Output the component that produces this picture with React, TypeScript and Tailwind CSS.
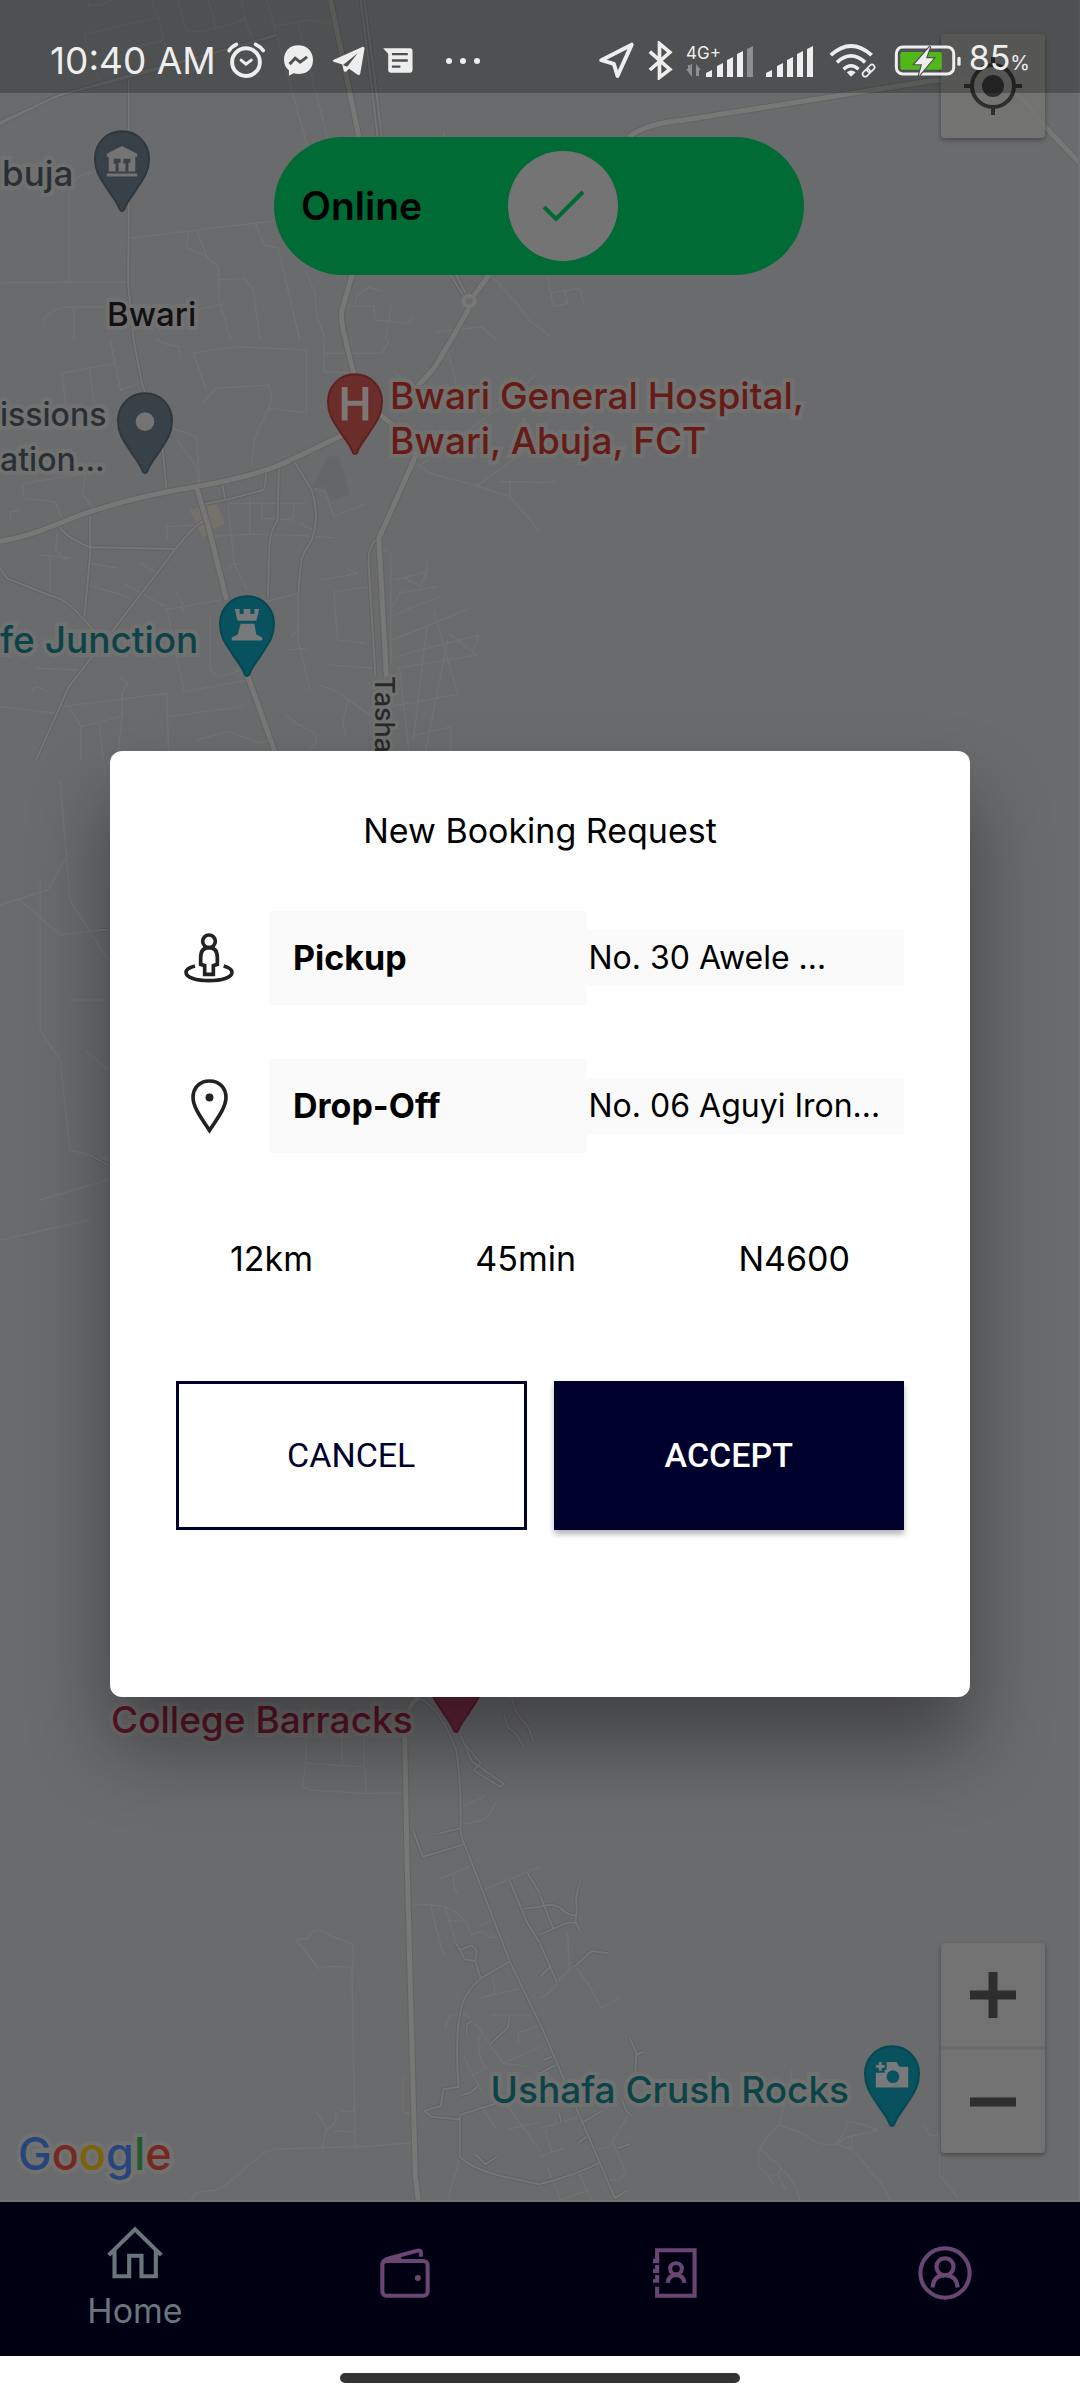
import React from "react";

const MINOR = "#717271";
const MID = "#747574";
const EDGE = "#626365";
const MAJOR = "#777775";

function Road({ d, kind = "minor" }: { d: string; kind?: "minor" | "mid" | "major" }) {
  if (kind === "minor") {
    return <path d={d} stroke={MINOR} strokeWidth="1.5" vectorEffect="non-scaling-stroke" />;
  }
  const wide = kind === "major";
  return (
    <>
      <path d={d} stroke={EDGE} strokeWidth={wide ? 7 : 4} vectorEffect="non-scaling-stroke" />
      <path d={d} stroke={wide ? MAJOR : MID} strokeWidth={wide ? 5 : 2} vectorEffect="non-scaling-stroke" />
    </>
  );
}

function MapRoads() {
  return (
    <svg aria-hidden="true" className="absolute top-0 left-0 h-[2202px] w-[1080px]" viewBox="0 0 1080 2202" fill="none" strokeLinejoin="round">
      <g transform="scale(.3444 .3333)">
        <Road d="M255 0L260 18L300 12L325 0M440 0L460 52L245 103L255 145L290 240M460 52L490 180M270 170L478 120M517 0L540 90L580 96L640 82L712 58L700 0M605 0L627 82M712 58L728 105L745 128" />
        <Road d="M775 0L890 430M797 78L900 60L968 72M865 68L950 410M0 848L372 846M200 850V600Q200 520 270 518M378 715L800 662M572 692L600 770L634 800L636 900L670 1020M547 697L542 745L605 770" />
        <Road d="M636 840L710 835L735 870L755 1020M740 668L768 735L808 745L850 930L870 1020M885 810L915 880L920 950L945 1015M1112 875L1070 862L1035 890L1030 920M1005 918L1085 918L1090 960L1190 970L1195 950M1137 915L1120 1020" />
        <Road d="M1430 830L1500 910L1540 965L1600 1010M125 965Q140 920 220 920L370 920M215 920V1020M570 930L650 912M1265 995L1400 980L1440 1020M1588 825L1606 920L1648 910L1640 875M1596 880L1683 865L1695 910M1290 390V415" />
        <Road kind="mid" d="M0 366L180 282Q400 230 805 103M0 372L160 290L410 215L800 108M374 240V400M374 600L372 850L388 1020M1047 0L1078 250L1096 410M1058 0L1090 250L1108 410" />
        <Road kind="major" d="M960 0L1042 410M1022 825L992 935Q990 980 1005 1020M1362 925L1310 1020M1420 825L1375 888M1826 410Q1878 370 1988 360L2658 250Q2728 237 2808 237Q2938 250 2988 320L3048 395L3136 490" />
        <Road kind="mid" d="M1308 825L1345 885M1325 825L1352 880" />
        <circle cx="1362" cy="903" r="16" stroke={MAJOR} strokeWidth="4" vectorEffect="non-scaling-stroke" />
      </g>
      <g transform="translate(0 340) scale(.3444 .3333)">
        <path d="M985 350L1015 465L960 485L945 440L905 445L950 350Z" fill="#656668" />
        <path d="M550 510L578 500L608 585L588 592ZM600 495L630 490L652 550L612 572Z" fill="#73716a" />
        <Road d="M180 100L335 70M180 100L190 190L235 250M260 90L275 200M320 0L350 150L412 128M455 0L490 15L520 20L525 55M560 40L680 20L890 30V220M560 40L600 150M590 190L625 145L780 135L790 175L780 205L885 218M780 205L740 290L730 380M940 0V95M940 40H1110L1130 0M940 95L1020 98M500 265L570 290L580 430" />
        <Road d="M515 300L570 380L578 430M1208 370L1250 400L1385 438L1480 470L1568 575M1385 438L1568 300M1220 375L1480 180L1560 100M1450 425H1540L1568 428L1612 424M1480 425L1480 470M1300 30L1320 110L1340 200M1140 90L1200 150" />
        <Road d="M665 490H885M725 465V585M620 590Q720 575 970 593M662 490L680 670L718 750M760 485V535L850 540L855 495M905 445L945 455L970 530L1062 490M870 550L910 570M665 690L670 672L700 670M30 545V515L55 510M65 430L70 475L160 485L185 545M70 430L250 400L240 460L275 515" />
        <Road d="M115 645L215 655M145 650V765M165 580L162 630L190 660M262 670L340 685M255 735L370 770M360 730L480 800M405 670L460 700M510 755L530 790L530 820M475 810L640 780M485 810L535 1055L720 1020M485 600V560L565 555" />
        <Road d="M105 985L235 990M90 1060L105 1040L145 1058M180 1100L485 1060L490 1260M345 1010L370 1030L355 1060V1130L340 1260M200 1100L235 1160V1260M235 1160L350 1130M288 1150L300 1260M0 1100L165 1120M485 1130L705 1100M570 1200L660 1175L760 1210L800 1180M825 1120L860 1150L915 1180L918 1210L870 1260" />
        <Road d="M640 820L865 760V900L900 1050M610 830V990L640 1010L730 980M840 930L890 925M845 890L870 860M1110 625L1135 640V970M1145 720L1240 695L1220 740L1170 710M1240 660V695M970 755L1070 740M970 755L980 900L1060 910M935 720L1040 700L1005 685" />
        <Road d="M1140 830L1200 800L1280 770M1140 800L1160 760L1265 740M1140 900L1365 805M1150 950L1390 885L1370 945M1150 985L1385 945L1305 880M1260 815L1330 1065M1240 860L1200 1200M1160 985L1190 1260M1300 900L1240 1210L1230 1260M955 975L1090 985M925 1035L970 1050L1095 1140M1010 1080L995 1150L1005 1190M1130 1100L1320 1065M1190 1190L1310 1160V1260" />
        <Road kind="mid" d="M388 0L412 130L470 300L483 450M170 555Q185 590 262 622L510 627M262 515V640L245 830M595 540Q560 560 510 627L325 875L200 1040L105 1260M0 685L20 715L150 768Q190 775 240 835L290 890M645 435L655 480" />
        <Road kind="mid" d="M595 492L655 480L765 450Q772 440 772 395M810 375L806 540Q780 580 781 640L778 770M850 357L905 450Q930 530 905 600Q880 640 875 660L866 755M1100 595Q1070 610 1070 665L1090 1010" />
        <Road kind="major" d="M0 604Q80 590 160 555Q330 480 570 440Q760 405 850 357L1000 283M570 440L605 560L658 780M718 1005L798 1235M1003 0L1028 105M1310 0L1260 85L1190 165M1105 225L1208 310V345L1100 595L1122 1010" />
      </g>
      <g>
        <Road d="M0 905L48 890L70 850M40 880V1030L60 1060M70 1000H108M60 780L70 900L108 960M20 900L60 935L100 930M85 1050L108 1070M40 1200L108 1180M60 1060L70 1150L108 1160M0 1240L90 1220" />
        <Road kind="mid" d="M100 930L108 930M90 1155L108 1165" />
      </g>
      <g transform="translate(0 1640) scale(.3444 .3571)">
        <Road d="M888 170V345L1058 355V265M888 345L878 410L900 420L1060 430L1168 428M1060 355L1063 430M993 270V345M860 840L925 920L945 914L1022 916M860 840L895 835Q905 810 925 812Q940 815 958 828L1020 850Q1030 870 1022 920L1025 1130L1032 1420" />
        <Road d="M555 1568Q565 1545 590 1543Q640 1545 670 1515L760 1440Q780 1425 830 1425L1080 1418L1195 1408M935 1425L948 1368L920 1322M948 1368Q980 1360 975 1325M970 1375L1030 1378M990 1320H1030M1170 1225V1320L1195 1328" />
        <Road d="M1198 743Q1290 735 1320 760Q1350 780 1370 825L1400 815L1420 832L1450 835M1250 740Q1270 830 1290 885M1290 745L1325 850M1305 785L1355 790M1278 668L1370 632M1330 712Q1300 660 1335 645M1335 470L1410 437M1340 515Q1400 510 1420 490L1440 455M1390 800L1430 785M1400 702L1530 650L1568 635" />
        <Road d="M1390 1003L1540 970M1430 940L1438 990M1293 1090Q1300 1040 1320 1050L1345 1045Q1370 1060 1400 1100L1460 1185L1535 1195M1395 1105Q1380 1160 1410 1200M1345 1165L1380 1230L1405 1275M1370 1220L1420 1195M1425 1050H1545M1460 1185L1568 1140M1505 1130V1100L1568 1080M1300 1568L1335 1450M1400 1310L1440 1368M1470 1300L1568 1430M1475 1370L1568 1350" />
        <Road kind="mid" d="M1215 162Q1280 190 1325 310Q1340 400 1337 525Q1340 560 1350 575L1480 900L1568 1075M1198 530L1228 607L1345 573M1270 543L1335 527M1335 262L1370 340L1462 402L1453 412L1375 365L1395 345L1350 290M1465 210L1475 245L1500 265L1522 302M1485 162L1500 205L1535 245L1548 282" />
        <Road kind="mid" d="M1480 900L1400 945Q1340 990 1335 1055Q1325 1090 1328 1200L1332 1252L1287 1258L1280 1305L1233 1318L1252 1335L1333 1342M1325 850L1350 895L1380 898L1385 870L1370 855L1335 868M1380 898L1395 945M1335 1330L1450 1295M1337 1275L1365 1268L1387 1250M1335 1330V1448Q1370 1480 1450 1500L1568 1525M1478 670L1530 790L1568 850M1520 752L1568 748M1530 650L1568 710M1425 1130L1475 1085L1480 1050M1355 1108L1357 1075L1372 1065M1380 1440L1410 1468L1445 1445" />
        <Road kind="major" d="M1215 162Q1180 180 1175 265L1182 620L1206 1500L1214 1568" />
      </g>
      <g transform="translate(540 1880) scale(.3444 .3333)">
        <Road d="M0 355Q40 335 50 305L85 270L80 155M105 262L145 320L178 385L228 355M265 690L210 785Q205 810 150 808M210 785L250 878L230 900H195M0 830L70 805M0 745L115 710M15 750L35 820M20 860L60 960M112 875L150 960M60 960L140 930" />
        <Road d="M730 570V590L695 735Q660 760 640 805Q625 850 645 870Q665 890 690 885L700 865Q690 845 670 838L640 805M695 735Q760 755 800 785Q830 800 860 792L895 770L980 752Q960 735 893 725L885 755L860 792L905 808V770M905 808Q940 840 960 878Q1000 910 1015 960M700 865Q740 900 755 960M690 885L715 930M660 885L680 915M1115 735L1130 765L1160 768V885L1215 955" />
        <Road kind="mid" d="M0 45L38 145M0 80Q50 65 70 95Q90 108 103 105M0 163L80 128H103M118 0Q100 50 107 90L103 125L115 152M98 262L150 213L198 220M0 190L50 310M0 290L28 262M0 430L218 955L252 932M10 540L35 530M0 580L45 555M110 790L135 770M120 730L180 693M0 912Q90 890 170 850M260 472L280 520L277 578M280 525L300 515M238 660L250 690L265 708M55 700L63 730M222 806L260 793" />
      </g>
    </svg>
  );
}

function Pin({ fill, edge, place, children }: { fill: string; edge: string; place: string; children?: React.ReactNode }) {
  return (
    <svg aria-hidden="true" className={`absolute h-[82px] w-[56px] ${place}`} viewBox="-1 -1 57 83">
      <path
        d="M27.5 0C12 0 0 12 0 28c0 15 8 23 14 33 6 9 9 12 11 18 1 3 4 3 5 0 2-6 5-9 11-18 6-10 14-18 14-33C55 12 43 0 27.500 0z"
        fill={fill}
        stroke={edge}
        strokeWidth="2"
      />
      {children}
    </svg>
  );
}

function MapLabel({ className, children }: { className: string; children: React.ReactNode }) {
  return (
    <p className={`absolute leading-[45px] font-medium whitespace-nowrap [-webkit-text-stroke:8px_#717170] [paint-order:stroke_fill] ${className}`}>
      {children}
    </p>
  );
}

function StatusBar() {
  return (
    <header className="absolute inset-x-0 top-0 z-20 flex h-[93px] items-center justify-between bg-black/25 pt-7 pr-[50px] pl-[50px] text-[#eeeeee]">
      <div className="flex items-center">
        <time className="text-[37px] leading-[40px]">10:40 AM</time>
        <svg aria-hidden="true" className="ml-[10px] h-[37px] w-[40px]" viewBox="655 124 116 112" fill="none" stroke="currentColor" strokeLinecap="round">
          <circle cx="713" cy="185" r="42" strokeWidth="12" />
          <path d="M698 179L713 191L729 179" strokeWidth="9" />
          <path d="M662 150Q668 139 684 131M742 131Q758 139 765 150" strokeWidth="11" />
        </svg>
        <svg aria-hidden="true" className="ml-[17px] h-[31px] w-[31px]" viewBox="818 134 90 94">
          <path d="M862 135C836 135 819 153 819 179C819 193 825 204 834 211V227L848 220C890 229 907 205 907 179C907 153 888 135 862 135Z" fill="currentColor" />
          <path d="M836 192L853 174L868 186L889 170" fill="none" stroke="#4f5051" strokeWidth="9" />
        </svg>
        <svg aria-hidden="true" className="ml-[18px] h-[30px] w-[33px]" viewBox="958 138 100 92">
          <path d="M963 186Q957 183 963 180L1050 141Q1058 138 1057 147L1044 222Q1042 231 1034 225L1010 208L1001 216Q995 220 993 212L989 195Z" fill="currentColor" />
          <path d="M991 196L1036 160L1004 202" fill="#4f5051" />
        </svg>
        <svg aria-hidden="true" className="ml-[18px] h-[25px] w-[30px]" viewBox="1109 143 88 74">
          <path d="M1109 144H1189Q1196 144 1196 151V209Q1196 216 1189 216H1131Q1124 216 1124 209V160Z" fill="currentColor" />
          <path d="M1135 161H1182M1135 180H1182M1135 198H1160" stroke="#4f5051" strokeWidth="7" />
        </svg>
        <svg aria-hidden="true" className="ml-8 h-[8px] w-[36px]" viewBox="0 0 36 8" fill="currentColor">
          <circle cx="4" cy="4" r="3" /><circle cx="18" cy="4" r="3" /><circle cx="32" cy="4" r="3" />
        </svg>
      </div>
      <div className="flex items-center">
        <svg aria-hidden="true" className="h-[37px] w-[37px]" viewBox="172 128 108 112" fill="none" stroke="currentColor" strokeWidth="12" strokeLinejoin="round">
          <path d="M180 183L272 136L229 231L218 194Z" />
        </svg>
        <svg aria-hidden="true" className="ml-[13px] h-[39px] w-[25px]" viewBox="318 121 72 117" fill="none" stroke="currentColor" strokeWidth="11">
          <path d="M322 153L382 206L351 230V129L382 155L322 208" />
        </svg>
        <svg aria-hidden="true" className="ml-[13px] h-[34px] w-[69px]" viewBox="0 0 69 34">
          <text x="0" y="15" fontSize="17" fill="#eee">4G+</text>
          <path d="M3 29l-3-4h2v-4h3v-1h1v13zM10 20l5 6h-2v6h-3z" fill="#8d8e90" />
          <path d="M20 33v-4l6-3v7zM31 33V22l6-3v14zM41 33V16l6-3v20zM51 33V10l6-3v26z" fill="#eee" />
          <path d="M61 33V5l6-3v31z" fill="#8d8e90" />
        </svg>
        <svg aria-hidden="true" className="ml-[11px] h-[34px] w-[48px]" viewBox="20 0 48 34">
          <path d="M20 33v-4l6-3v7zM31 33V22l6-3v14zM41 33V16l6-3v20zM51 33V10l6-3v26zM61 33V5l6-3v31z" fill="#eee" />
        </svg>
        <svg aria-hidden="true" className="ml-[14px] h-[36px] w-[50px]" viewBox="838 128 146 110" fill="none" stroke="currentColor">
          <path d="M843 165Q905 109 968 165" strokeWidth="12" />
          <path d="M862 187Q905 148 948 187" strokeWidth="11" />
          <path d="M882 208Q905 187 928 208" strokeWidth="10" />
          <path d="M892 217Q905 207 919 217L905 231Z" fill="currentColor" stroke="none" />
          <g transform="rotate(-45 959 212)" strokeWidth="5"><rect x="936" y="204" width="26" height="16" rx="8" /><rect x="955" y="204" width="26" height="16" rx="8" /></g>
        </svg>
        <svg aria-hidden="true" className="ml-[15px] h-[31px] w-[70px]" viewBox="1026 132 204 94">
          <rect x="1032" y="138" width="174" height="82" rx="20" fill="none" stroke="currentColor" strokeWidth="9" />
          <rect x="1044" y="153" width="126" height="54" rx="6" fill="#52b81a" />
          <path d="M1135 136L1087 190H1110L1100 226L1145 172H1122Z" fill="#eee" stroke="#4f5051" strokeWidth="7" paintOrder="stroke" />
          <rect x="1217" y="168" width="10" height="27" rx="5" fill="currentColor" />
        </svg>
        <span className="ml-[6px] text-[34px] leading-[40px]">85<span className="text-[20px]">%</span></span>
      </div>
    </header>
  );
}

function MapView() {
  return (
    <main className="relative flex-1 overflow-hidden border-r-2 border-b-2 border-[#717273] bg-[#6a6b6d]">
      <MapRoads />

      <Pin fill="#384148" edge="#2e373d" place="top-[130px] left-[94px]">
        <path d="M12 23L27.500 15L43 23V26H12ZM14 26h27v15H14zM12 43h31v3H12z" fill="#747474" />
        <path d="M19 28h7v4h-2v9h-3v-8h-2zM29 28h7v4h-2v9h-3v-8h-2z" fill="#384148" />
      </Pin>
      <MapLabel className="top-[151px] left-[2px] text-[35px] text-[#283035]">buja</MapLabel>
      <MapLabel className="top-[292px] left-[107px] text-[33px] text-[#101112]">Bwari</MapLabel>

      <Pin fill="#384148" edge="#2e373d" place="top-[392px] left-[117px]">
        <circle cx="27.500" cy="29" r="9.500" fill="#747474" />
      </Pin>
      <MapLabel className="top-[392px] left-0 w-[104px] text-right text-[32px] text-[#283035]">issions<br />ation...</MapLabel>

      <Pin fill="#6b2d2a" edge="#5f211e" place="top-[373px] left-[327px]">
        <path d="M14 13h6v14h15V13h6v34h-6V32H20v15h-6z" fill="#7d7775" />
      </Pin>
      <MapLabel className="top-[373px] left-[390px] text-[37px] text-[#661b17]">Bwari General Hospital,<br />Bwari, Abuja, FCT</MapLabel>

      <Pin fill="#07525e" edge="#074751" place="top-[595px] left-[219px]">
        <path d="M15 13h5v5h4v-5h7v5h4v-5h5l-3 12H18zM21 28h14l2 11 6 3v3H12v-3l6-3z" fill="#78797a" />
      </Pin>
      <MapLabel className="top-[617px] left-0 text-[37px] text-[#0b4349]">fe Junction</MapLabel>
      <p className="absolute top-[676px] left-[366px] text-[27px] leading-[36px] font-medium whitespace-nowrap text-[#27292b] [writing-mode:vertical-rl] [-webkit-text-stroke:6px_#717170] [paint-order:stroke_fill]">Tasha</p>

      <Pin fill="#632439" edge="#561b30" place="top-[1651px] left-[428px]" />
      <MapLabel className="top-[1697px] left-[111px] text-[37px] text-[#5c1329]">College Barracks</MapLabel>

      <Pin fill="#07525e" edge="#074751" place="top-[2045px] left-[864px]">
        <path d="M22 16h10l3 5h9v21H11V27h9v-3h2z" fill="#78797a" />
        <path d="M14 16h3v3h3v3h-3v3h-3v-3h-3v-3h3z" fill="#78797a" />
        <circle cx="28.500" cy="31" r="6.500" fill="#07525e" />
      </Pin>
      <MapLabel className="top-[2067px] right-[229px] text-[37px] text-[#0b4349]">Ushafa Crush Rocks</MapLabel>

      <p className="absolute bottom-[18px] left-[18px] text-[45px] leading-[56px] font-medium [-webkit-text-stroke:8px_#717170] [paint-order:stroke_fill]">
        <span className="text-[#27457c]">G</span>
        <span className="text-[#76291f]">o</span>
        <span className="text-[#7c6208]">o</span>
        <span className="text-[#27457c]">g</span>
        <span className="text-[#1f5a31]">l</span>
        <span className="text-[#76291f]">e</span>
      </p>

      <button type="button" role="switch" aria-checked="true" className="absolute inset-x-0 top-[137px] mx-auto flex h-[138px] w-[530px] items-center rounded-full bg-[#006b35] pl-[27px]">
        <span className="w-[207px] text-left text-[39px] leading-[48px] font-semibold text-black">Online</span>
        <span className="flex size-[110px] items-center justify-center rounded-full bg-[#747474]">
          <svg aria-hidden="true" className="h-[34px] w-[44px]" viewBox="0 0 44 34" fill="none" stroke="#006b35" strokeWidth="4">
            <path d="M3 18L15 30L42 3" />
          </svg>
        </span>
      </button>

      <button type="button" aria-label="My location" className="absolute top-[34px] right-[33px] flex size-[104px] items-center justify-center rounded-sm bg-[#747473]/85 shadow-[0_2px_5px_rgba(0,0,0,0.35)]">
        <svg aria-hidden="true" className="size-[60px]" viewBox="0 0 60 60" fill="none" stroke="#2e2e2e" strokeWidth="4">
          <circle cx="30" cy="30" r="21" />
          <circle cx="30" cy="30" r="11" fill="#2e2e2e" stroke="none" />
          <path d="M30 1V9M30 51V59M1 30H9M51 30H59" />
        </svg>
      </button>

      <div className="absolute right-[33px] bottom-[47px] flex w-[104px] flex-col gap-1 rounded-sm bg-[#6a6a6b] shadow-[0_2px_5px_rgba(0,0,0,0.35)]">
        <button type="button" aria-label="Zoom in" className="flex h-[103px] items-center justify-center rounded-t-sm bg-[#727272]">
          <svg aria-hidden="true" className="size-[46px]" viewBox="0 0 46 46"><path d="M18.500 0h9v18.500H46v9H27.500V46h-9V27.500H0v-9h18.500z" fill="#2e2e2e" /></svg>
        </button>
        <button type="button" aria-label="Zoom out" className="flex h-[103px] items-center justify-center rounded-b-sm bg-[#727272]">
          <svg aria-hidden="true" className="size-[46px]" viewBox="0 0 46 46"><path d="M0 18.500h46v9H0z" fill="#2e2e2e" /></svg>
        </button>
      </div>
    </main>
  );
}

function StopRow({ label, value, icon }: { label: string; value: string; icon: React.ReactNode }) {
  return (
    <div className="flex items-center">
      <span className="mr-[27px] flex w-[66px] justify-center">{icon}</span>
      <div className="grid flex-1 grid-cols-2 items-center">
        <dt className="bg-[#fafafa] px-6 py-[19px] text-[34px] leading-[56px] font-bold">{label}</dt>
        <dd className="bg-[#fafafa] pl-[2px] text-[32px] leading-[56px] whitespace-nowrap">{value}</dd>
      </div>
    </div>
  );
}

function BookingDialog() {
  return (
    <div className="absolute inset-0 z-10 flex items-center justify-center px-[110px] pt-12">
      <section role="dialog" aria-labelledby="booking-title" className="w-full rounded-[12px] bg-white px-[66px] pt-[50px] pb-[167px] text-black shadow-[0_48px_80px_rgba(0,0,0,0.38)]">
        <h1 id="booking-title" className="text-center text-[34px] leading-[60px]">New Booking Request</h1>
        <dl className="mt-[50px] flex flex-col gap-[54px]">
          <StopRow
            label="Pickup"
            value="No. 30 Awele …"
            icon={
              <svg aria-hidden="true" className="size-[50px]" viewBox="252 576 150 150" fill="none" stroke="#222" strokeWidth="11">
                <circle cx="327" cy="601" r="19" />
                <path d="M302 670V650Q302 620 327 620Q352 620 352 650V670L340 674V700H314V674L302 670Z" />
                <path d="M285 675Q258 682 258 694C258 710 290 719 327 719C364 719 396 710 396 694Q396 682 371 675" />
              </svg>
            }
          />
          <StopRow
            label="Drop-Off"
            value="No. 06 Aguyi Iron…"
            icon={
              <svg aria-hidden="true" className="h-[58px] w-[41px]" viewBox="265 1008 124 176" fill="none" stroke="#222" strokeWidth="11">
                <path d="M327 1020C296 1020 277 1043 277 1070C277 1098 300 1130 327 1170C354 1130 377 1098 377 1070C377 1043 358 1020 327 1020Z" />
                <circle cx="327" cy="1070" r="12" fill="#222" stroke="none" />
              </svg>
            }
          />
        </dl>
        <div className="mt-[76px] flex justify-between px-[54px] text-[34px] leading-[60px]">
          <span>12km</span>
          <span>45min</span>
          <span>N4600</span>
        </div>
        <div className="mt-[92px] grid grid-cols-2 gap-[27px] font-['Roboto',sans-serif] text-[34px]">
          <button type="button" className="h-[149px] border-[3px] border-[#00002d] bg-white text-[#00002d]">CANCEL</button>
          <button type="button" className="h-[149px] bg-[#00002d] font-medium text-white shadow-[0_4px_6px_rgba(0,0,0,0.3)]">ACCEPT</button>
        </div>
      </section>
    </div>
  );
}

function BottomNav() {
  return (
    <nav className="flex h-[154px] bg-[#000013] text-[#6b4673]">
      <a href="#home" className="flex flex-1 flex-col items-center justify-center gap-[7px] pt-1 text-[#6b757c]">
        <svg aria-hidden="true" className="h-[53px] w-[56px]" viewBox="309 135 164 160" preserveAspectRatio="none" fill="none" stroke="currentColor" strokeWidth="12">
          <path d="M314 223L391 145L468 223M331 205V287H374V225H410V287H452V205" />
        </svg>
        <span className="text-[34px] leading-[50px]">Home</span>
      </a>
      <a href="#wallet" aria-label="Wallet" className="flex flex-1 items-center justify-center pb-3">
        <svg aria-hidden="true" className="size-[50px]" viewBox="1102 202 148 153" preserveAspectRatio="none" fill="none" stroke="currentColor" strokeWidth="12">
          <rect x="1109" y="242" width="134" height="106" rx="12" />
          <path d="M1110 252Q1108 239 1130 233L1213 210Q1223 208 1223 216V229M1130 243L1165 232" />
          <circle cx="1214" cy="294" r="9" fill="currentColor" stroke="none" />
        </svg>
      </a>
      <a href="#contacts" aria-label="Contacts" className="flex flex-1 items-center justify-center pb-3">
        <svg aria-hidden="true" className="h-[50px] w-[44px]" viewBox="325 203 128 152" preserveAspectRatio="none" fill="none" stroke="currentColor" strokeWidth="12">
          <path d="M337 242V210H446V348H337V321" />
          <path d="M325 236h18v13h-18zM331 255h12v24h-18v-12h6zM331 285h12v24h-18v-12h6z" fill="currentColor" stroke="none" />
          <circle cx="392" cy="266" r="17" />
          <path d="M368 309Q370 286 392 286Q414 286 416 309" />
        </svg>
      </a>
      <a href="#profile" aria-label="Profile" className="flex flex-1 items-center justify-center pb-3">
        <svg aria-hidden="true" className="size-[54px]" viewBox="1097 197 158 164" preserveAspectRatio="none" fill="none" stroke="currentColor" strokeWidth="12">
          <ellipse cx="1176" cy="279" rx="72" ry="75" />
          <ellipse cx="1176" cy="260" rx="25" ry="26" />
          <path d="M1140 323Q1142 286 1176 286Q1210 286 1213 323" />
        </svg>
      </a>
    </nav>
  );
}

export default function App() {
  return (
    <div className="relative flex min-h-screen flex-col overflow-hidden bg-white font-['Inter',sans-serif]">
      <StatusBar />
      <MapView />
      <BottomNav />
      <BookingDialog />
      <div className="flex h-[44px] justify-center pt-[17px]">
        <span className="h-[10px] w-[37%] rounded-full bg-[#333333]" />
      </div>
    </div>
  );
}
